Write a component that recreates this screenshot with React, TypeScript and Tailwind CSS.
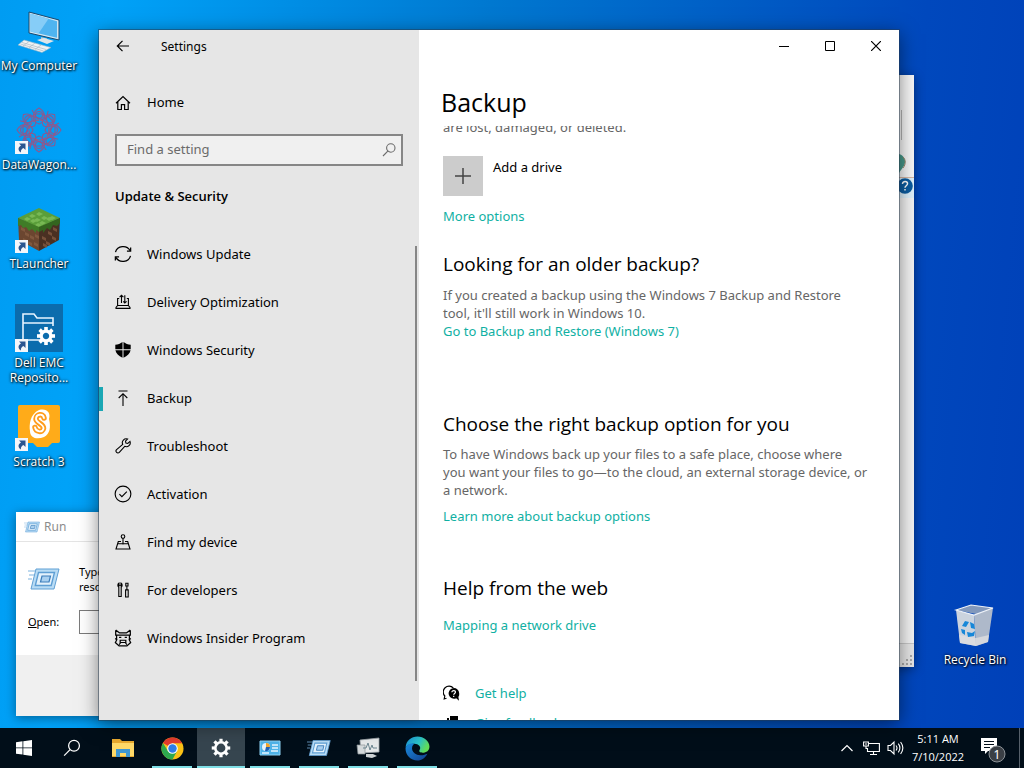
import type { ReactNode } from "react";

type IconProps = { className?: string };

/* ---------- line icons (16px grid) ---------- */

function Line({ children, size = 16 }: { children: ReactNode; size?: number }) {
  return (
    <svg width={size} height={size} viewBox="0 0 16 16" fill="none" stroke="currentColor" strokeWidth="1.1" className="shrink-0" aria-hidden="true">
      {children}
    </svg>
  );
}

const BackArrow = () => <Line><path d="M14 8H2.5M7.5 2.8 2.3 8l5.2 5.2" strokeWidth="1.2" /></Line>;
const HomeIcon = () => <Line><path d="M1 8.3 8 1.5l7 6.8M2.8 6.8v7.7h3.6V9.600h3.200v4.900h3.600V6.800" strokeWidth="1.2" /></Line>;
const SearchIcon = () => <Line><circle cx="9.8" cy="6" r="4.2" /><path d="M6.8 9.1 2 14" /></Line>;
const UpdateIcon = () => (
  <Line size={18}>
    <path d="M1.3 6.3A7 6.6 0 0 1 14.3 5M14.7 9.600A7 6.600 0 0 1 1.700 11" />
    <path d="M14.8 2.200v3.300h-3.300M1.200 13.800v-3.300h3.300" />
  </Line>
);
const DeliveryIcon = () => (
  <Line>
    <path d="M4.2 4.5H2.6v7h10.8v-7h-1.6M2.6 11.5 1 13.4v1h14v-1l-1.6-1.9" />
    <path d="M6.5 9V1.3M4.6 3.2l1.9-1.9 1.9 1.9M9.8 1.3V9M8.3 7.4 9.8 9l1.8-1.6" />
  </Line>
);
const ShieldIcon = () => (
  <svg width="16" height="16" viewBox="0 0 16 16" fill="currentColor" className="shrink-0" aria-hidden="true">
    <path d="M7.5 0v7.3H.3V2.8C3 2.6 5.4 1.6 7.5 0zM8.5 0c2.1 1.6 4.5 2.6 7.2 2.8v4.500H8.500zM.4 8.300h7.100v7.500C3.600 14 1 11.600.4 8.300zM15.600 8.300H8.500v7.500c3.900-1.800 6.500-4.200 7.100-7.500z" />
  </svg>
);
const BackupIcon = () => <Line><path d="M3.500 1h9M8 16V3.800M3.700 8 8 3.700 12.300 8" /></Line>;
const WrenchIcon = () => (
  <Line>
    <path d="M15 3.400a3.900 3.900 0 0 1-5.300 4.900L4.300 14.400a1.900 1.900 0 0 1-2.700-2.700l6.100-5.400A3.900 3.900 0 0 1 12.600 1L10.500 3.200l.4 1.900 1.900.4z" />
  </Line>
);
const ActivationIcon = () => <Line size={18}><circle cx="8" cy="8" r="7" strokeWidth="1" /><path d="m4.800 8.200 2.200 2.200 4.400-4.600" strokeWidth="1" /></Line>;
const FindIcon = () => (
  <Line><circle cx="8" cy="2.600" r="1.800" /><path d="M8 4.400v6M6 7.500H3.300L1 15h14l-2.300-7.500H10M3 9.800h10" /></Line>
);
const DevIcon = () => (
  <Line>
    <path d="M4 1v2.800h2V1c1.400.6 1.600 3.200.2 4.200v9.300H3.800V5.200C2.400 4.200 2.600 1.600 4 1zM10.600 15V8h2.600v7zM10.200 7.800h3.400M11.900 7.800V4M10.800 4V1.200h2.200V4z" />
  </Line>
);
const InsiderIcon = () => (
  <Line size={18}>
    <path d="M1.500 1v5M14.500 1v5M1.500 1 5 3.500h6L14.500 1M1.500 5.500h13M2.300 6v3M13.700 6v3M1 8.500l1.500 1L1.200 12l3.300 3h7l3.300-3-1.300-2.500 1.500-1" />
    <path d="M4.500 7.500h2M9.500 7.500h2M5.500 10h5v2h-5zM4.500 14l1.500-2M11.500 14 10 12" />
  </Line>
);

const HelpIcon = () => (
  <svg width="17" height="17" viewBox="0 0 17 17" className="shrink-0" aria-hidden="true">
    <path d="M3.500 13.300 1.200 14l.6-3A5 5 0 1 1 10.300 3" fill="none" stroke="#000" strokeWidth="1.200" />
    <path d="M16.200 8.200a5.300 5.300 0 1 0-3 5l2.800 2.600-.6-3.800a5 5 0 0 0 .8-3.800z" fill="#000" />
    <path d="M8.900 7.300c0-2.400 3.900-2.300 3.500 0-.2 1.200-1.700 1.100-1.700 2.500M10.700 10.800v1.200" fill="none" stroke="#fff" strokeWidth="1.200" />
  </svg>
);
const FeedbackIcon = () => (
  <svg width="17" height="17" viewBox="0 0 17 17" className="shrink-0" aria-hidden="true">
    <path d="M7 1h8v7h-4l-2 2V8H7zM4 3h2v5h3v5H4z" fill="#000" />
  </svg>
);

/* ---------- colour icons ---------- */

const ComputerIcon = () => (
  <svg width="48" height="48" viewBox="0 0 48 48" aria-hidden="true">
    <path d="m14 5 30 8v20l-30-7z" fill="#cfe6f3" stroke="#17486f" />
    <path d="m15.500 6.800 26.500 7.400v16.600l-26.500-6.200z" fill="#4fb4f0" />
    <path d="m15.500 6.800 18 5-10 14.600-8-1.800z" fill="#86cdf7" />
    <path d="m26 30 6 1.500v3l-6-1.500z" fill="#b7c3ca" />
    <path d="m22 33 7-2 10 3-7 3z" fill="#dfe5e8" />
    <path d="m9 33 27 7.500-9 5L3 38z" fill="#f0f2f3" stroke="#8fb3c9" strokeWidth=".6" />
    <path d="m7 35.500 24 7M5.500 37l23 7M14 34.500l-6 4.500M20 36l-6 4.700M26 38l-6 4.500" stroke="#a9bac5" strokeWidth=".7" />
  </svg>
);

const SWIRL = [0, 45, 90, 135, 180, 225, 270, 315];
const DataWagonIcon = () => (
  <svg width="48" height="48" viewBox="0 0 48 48" fill="none" aria-hidden="true">
    <g stroke="#8a5a90" strokeWidth="1.100">
      {SWIRL.map((deg) => (
        <g key={deg} transform={`rotate(${deg} 24 24)`}>
          <path d="M24 18c-8-3-7-12 0-16 7 4 8 13 0 16zM20 8h8l3 5M17 4l4 7 7 3" />
          <circle cx="24" cy="9" r="3.500" />
        </g>
      ))}
    </g>
    <circle cx="24" cy="24" r="10" stroke="#a05a80" strokeWidth="1.300" strokeDasharray="3 1" />
  </svg>
);

const GRASS = ["12 12", "17 9", "24 7", "29 11", "34 12", "22 13", "27 16", "18 14", "37 11", "23 18"];
const DIRT = ["6 22", "10 27", "15 30", "8 33", "19 37", "13 36", "20 29", "27 31", "33 26", "38 22", "31 36", "37 31", "28 38"];
const BlockIcon = () => (
  <svg width="48" height="48" viewBox="0 0 48 48" aria-hidden="true">
    <path d="m3 13 21 9v24L4 35z" fill="#6b4630" />
    <path d="m45 13-21 9v24l20-11z" fill="#4a3022" />
    {DIRT.map((p) => <path key={p} d={`M${p}l4 2v3l-4-2z`} fill="#8a6044" opacity=".7" />)}
    <path d="m24 3 21 10-21 10L3 13z" fill="#5a9e3a" />
    {GRASS.map((p) => <path key={p} d={`M${p}l4 2-4 2-3-2z`} fill="#78b854" />)}
    <path d="m3 13 21 9v5l-3-2v3l-4-4-3 2-3-4-3 1-2-3-3 1z" fill="#3f7c27" />
    <path d="m45 13-21 9v5l4-2v3l4-5 3 2 3-5 4 1 3-3z" fill="#33651f" />
  </svg>
);

const GEAR_TEETH = [0, 45, 90, 135, 180, 225, 270, 315];
function Gear({ r, hole, tooth }: { r: number; hole: number; tooth: number }) {
  return (
    <g>
      <circle r={(r + hole) / 2} fill="none" stroke="#fff" strokeWidth={r - hole} />
      {GEAR_TEETH.map((deg) => (
        <rect key={deg} x={-tooth / 2} y={-r - tooth * 0.7} width={tooth} height={tooth} fill="#fff" transform={`rotate(${deg})`} />
      ))}
    </g>
  );
}

const DellIcon = () => (
  <svg width="48" height="48" viewBox="0 0 48 48" aria-hidden="true">
    <rect width="48" height="48" fill="#0b6cad" />
    <path d="M26 36H8V10h11l3 4h16v8M8 19h30" fill="none" stroke="#e6f4ff" strokeWidth="1.600" />
    <g transform="translate(31 32)">
      <Gear r={6.500} hole={3.200} tooth={3.600} />
    </g>
  </svg>
);

const ScratchIcon = () => (
  <svg width="48" height="48" viewBox="0 0 48 48" aria-hidden="true">
    <path d="M5 2h38q2 0 2 2v34q0 2-2 2h-6l-4 4H22l-4-4H5q-2 0-2-2V4q0-2 2-2z" fill="#ffab19" />
    <path d="M24 7c8-2 12 3 10 9 2 8 1 15-5 18-7 3-14 1-14-6-1-6 0-17 9-21z" fill="#fff" />
    <path d="M29 15c-1-5-8-4-8 1 0 4 8 5 7.500 9.500-1 4.500-7.500 3.500-8.500-1" fill="none" stroke="#ff9d1c" strokeWidth="5.500" strokeLinecap="round" />
    <path d="M29 15c-1-5-8-4-8 1 0 4 8 5 7.500 9.500-1 4.500-7.500 3.500-8.500-1" fill="none" stroke="#fff" strokeWidth="1.800" strokeLinecap="round" />
  </svg>
);

const ShortcutMark = () => (
  <svg width="13" height="13" viewBox="0 0 13 13" className="absolute bottom-0 left-0" aria-hidden="true">
    <rect width="13" height="13" fill="#f4f6fa" />
    <path d="M4 2.500h6.500V9L8.500 7c-2 1-3 2.500-2.500 4.500C2.500 9.500 3 6 6 4.500z" fill="#2b5590" />
  </svg>
);

const RecycleIcon = () => (
  <svg width="48" height="48" viewBox="0 0 48 48" aria-hidden="true">
    <path d="m5 9 15-5 22 3-7 8z" fill="#8298bb" />
    <path d="m5 9 18 5 2 31-16-3z" fill="#cbd3de" />
    <path d="m42 7-19 7 2 31 12-4z" fill="#aeb9ca" />
    <path d="m8 34 17 3 13-3-1 7-12 4-16-3z" fill="#dedfe0" opacity=".8" />
    <path d="m5 9 15-5 22 3-19 7z" fill="none" stroke="#eef2f8" strokeWidth="1.200" />
    <path d="m11 25 3-5 4 1-3 5zM19 21l4 2 1 5-4-1zM10 28l4 1v5l-3-2zM16 31l5 1 3-2-1 5-6 1z" fill="#1787d8" />
  </svg>
);

const RunIcon = ({ className }: IconProps) => (
  <svg viewBox="0 0 32 24" className={className} aria-hidden="true">
    <path d="M8 2h23l-5 20H3z" fill="#b9dcf5" stroke="#5f9fd4" strokeWidth="1" />
    <path d="M10.500 5.500h16l-3.300 13H7.300z" fill="#e4f2fc" stroke="#5f9fd4" strokeWidth="1.400" />
    <path d="M14 9h8.500l-1.500 6h-8.500z" fill="#a9d0f0" stroke="#3c7dba" strokeWidth="1.200" />
    <path d="M0 4h7M1 8h5M0 12h4" stroke="#7db3df" />
  </svg>
);

const WindowsLogo = () => (
  <svg width="16" height="16" viewBox="0 0 16 16" fill="#fff" aria-hidden="true">
    <path d="m0 2.200 6.500-.9v6.200H0zM7.300 1.200 16 0v7.500H7.300zM0 8.300h6.500v6.300L0 13.700zM7.300 8.300H16V16l-8.700-1.200z" />
  </svg>
);
const ExplorerIcon = () => (
  <svg width="22" height="18" viewBox="0 0 22 18" aria-hidden="true">
    <path d="M0 0h8l2 2h12v16H0z" fill="#e8a92f" />
    <path d="M0 4h22v13H0z" fill="#ffd968" />
    <path d="M4 10h14v8h-4v-4H8v4H4z" fill="#3f97d3" />
  </svg>
);
const ChromeIcon = () => (
  <svg width="23" height="23" viewBox="0 0 24 24" aria-hidden="true">
    <circle cx="12" cy="12" r="11.500" fill="#fbc116" />
    <path d="M12 12 2.040 6.250A11.500 11.500 0 0 1 21.960 6.250L22 6.500H12z" fill="#e33b2e" />
    <path d="M2.040 6.250A11.500 11.500 0 0 0 12 23.500L16.800 14.700 12 12 7.200 14.700z" fill="#2da94f" />
    <circle cx="12" cy="12" r="5.500" fill="#fff" />
    <circle cx="12" cy="12" r="4.400" fill="#2f7de9" />
  </svg>
);
const SettingsGear = () => (
  <svg width="20" height="20" viewBox="-10 -10 20 20" aria-hidden="true"><Gear r={7} hole={4.400} tooth={3.200} /></svg>
);
const ControlPanelIcon = () => (
  <svg width="22" height="18" viewBox="0 0 22 18" aria-hidden="true">
    <path d="M1 2h20v14H1z" fill="#4fb3e8" stroke="#8fd3f6" />
    <circle cx="7" cy="8" r="4" fill="#e8f4fb" />
    <path d="M7 8V4a4 4 0 0 1 4 4z" fill="#f2a52c" />
    <path d="M7 8h4a4 4 0 0 1-5 4z" fill="#2262b5" />
    <path d="M13 6h6M13 9h6M12 12h7M3 14h7" stroke="#e8f6ff" strokeWidth="1.300" />
  </svg>
);
const MonitorAppIcon = () => (
  <svg width="24" height="22" viewBox="0 0 24 22" aria-hidden="true">
    <path d="M4 3 23 1v14L5 16z" fill="#e6e9ea" stroke="#9da5a8" strokeWidth=".8" />
    <path d="M1 8h8v9H2z" fill="#d4d9db" stroke="#8d9599" strokeWidth=".7" />
    <path d="M7 11h3l2-5 2 7 2-5 1 3h4" fill="none" stroke="#6c8690" />
    <path d="M10 17h7l4 2-5 2-6-1z" fill="#cdd2d4" />
  </svg>
);
const EdgeIcon = () => (
  <svg width="25" height="25" viewBox="0 0 24 24" aria-hidden="true">
    <defs>
      <linearGradient id="edgeTop" x1="0" y1="0" x2="1" y2=".4">
        <stop offset="0" stopColor="#1c8fd8" /><stop offset=".6" stopColor="#2bc3c9" /><stop offset="1" stopColor="#62dd58" />
      </linearGradient>
      <linearGradient id="edgeLow" x1="0" y1="0" x2="1" y2="1">
        <stop offset="0" stopColor="#1a8de0" /><stop offset="1" stopColor="#123f8d" />
      </linearGradient>
    </defs>
    <path d="M.6 11C1 4.500 6 .5 12 .5S23.500 5 23.500 10c0 4-3 6-6.500 6-2.500 0-4-1-3-2.500 2-3-1-6-5-6-4 0-7.500 1.500-8.400 3.500z" fill="url(#edgeTop)" />
    <path d="M.5 12c.5-4 5-5.500 8.500-4.500C5 10 6 18 14.500 18.500c3 .2 5-.8 7-1.500-2 4-5.500 6.500-9.500 6.500C5.500 23.500.5 18.500.5 12z" fill="url(#edgeLow)" />
  </svg>
);

/* ---------- data ---------- */

const NAV = [
  { label: "Windows Update", icon: <UpdateIcon /> },
  { label: "Delivery Optimization", icon: <DeliveryIcon /> },
  { label: "Windows Security", icon: <ShieldIcon /> },
  { label: "Backup", icon: <BackupIcon />, active: true },
  { label: "Troubleshoot", icon: <WrenchIcon /> },
  { label: "Activation", icon: <ActivationIcon /> },
  { label: "Find my device", icon: <FindIcon /> },
  { label: "For developers", icon: <DevIcon /> },
  { label: "Windows Insider Program", icon: <InsiderIcon /> },
];

const SHORTCUTS = [
  { label: "My Computer", icon: <ComputerIcon /> },
  { label: "DataWagon...", icon: <DataWagonIcon />, link: true },
  { label: "TLauncher", icon: <BlockIcon />, link: true },
  { label: "Dell EMC Reposito...", icon: <DellIcon />, link: true },
  { label: "Scratch 3", icon: <ScratchIcon />, link: true },
];

const TASKS = [
  { label: "File Explorer", icon: <ExplorerIcon /> },
  { label: "Chrome", icon: <ChromeIcon />, open: true },
  { label: "Settings", icon: <SettingsGear />, open: true, active: true },
  { label: "Control Panel", icon: <ControlPanelIcon />, open: true },
  { label: "Run", icon: <RunIcon className="h-[18px] w-6" />, open: true },
  { label: "Monitor", icon: <MonitorAppIcon />, open: true },
  { label: "Edge", icon: <EdgeIcon />, open: true },
];

/* ---------- pieces ---------- */

function DesktopIcon({ label, icon, link }: { label: string; icon: ReactNode; link?: boolean }) {
  return (
    <button className="flex h-[99px] w-[78px] flex-col items-center gap-[3px] pt-[7px] text-xs leading-[15px] text-white [text-shadow:1px_1px_2px_#000,0_0_3px_#000]">
      <span className="relative">
        {icon}
        {link && <ShortcutMark />}
      </span>
      <span>{label}</span>
    </button>
  );
}

function TextLink({ children }: { children: ReactNode }) {
  return <a href="#" className="block text-[13px] leading-[18px] text-[#10b0a3]">{children}</a>;
}

function SectionTitle({ children }: { children: ReactNode }) {
  return <h2 className="font-['Open_Sans',sans-serif] text-[19px] leading-8 text-black">{children}</h2>;
}

function RunDialog() {
  return (
    <section className="absolute bottom-3 left-4 flex h-[204px] w-[400px] flex-col bg-[#f0f0f0] shadow-[0_2px_10px_rgba(0,0,0,0.4)]">
      <header className="flex h-[30px] items-center gap-1 border-b border-[#e4e4e4] bg-white pl-2 text-xs text-[#8c8c8c]">
        <RunIcon className="h-3 w-4" /> Run
      </header>
      <div className="flex h-[113px] flex-col gap-4 bg-white px-3 pt-[22px] text-[11px] text-black">
        <div className="flex items-center gap-[19px]">
          <RunIcon className="h-6 w-8" />
          <p className="leading-[15px]">Type a<br />resource</p>
        </div>
        <div className="flex items-center">
          <label htmlFor="open" className="w-[51px]"><u>O</u>pen:</label>
          <input id="open" className="h-6 flex-1 border border-[#7a7a7a] px-1" />
        </div>
      </div>
    </section>
  );
}

function BackWindow() {
  return (
    <section className="absolute top-[75px] right-[110px] bottom-[61px] left-[500px] flex flex-col items-end bg-[#f3f3f3] shadow-[0_2px_10px_rgba(0,0,0,0.4)]">
      <svg width="15" height="128" viewBox="0 0 15 128" aria-hidden="true">
        <path d="M0 0h15v102H0z" fill="#f7f7f7" />
        <path d="M2.500 35v30" stroke="#b4b4b4" />
        <path d="M0 79c4 1 7 5 6 9s-3 5-6 10z" fill="#47998a" />
        <path d="M4 82c3 3 3 7 0 11" stroke="#a08a6c" fill="none" />
        <path d="M0 102.500h15" stroke="#d8b8a4" />
        <path d="M0 103h15v20H0z" fill="#dff1fb" />
        <circle cx="6" cy="111" r="7.800" fill="#0b5ca0" />
        <path d="M3.500 109c0-3.500 5.500-3.200 5 0-.3 1.800-2.500 1.800-2.500 3.800M6 114v1.600" fill="none" stroke="#fff" strokeWidth="1.500" />
      </svg>
      <footer className="mt-auto flex h-6 w-full items-end justify-end border-t border-[#c8c8c8] bg-[#e6e6e6] p-0.5">
        <svg width="10" height="10" viewBox="0 0 10 10" fill="#a8a8a8" aria-hidden="true">
          <path d="M8 0h2v2H8zM4 4h2v2H4zM8 4h2v2H8zM0 8h2v2H0zM4 8h2v2H4zM8 8h2v2H8z" />
        </svg>
      </footer>
    </section>
  );
}

function Sidebar() {
  return (
    <aside className="flex w-80 shrink-0 flex-col bg-[#e6e6e6] text-[13px] text-black">
      <div className="flex h-8 items-center text-xs">
        <button className="flex w-12 justify-center" aria-label="Back"><BackArrow /></button>
        <span className="pt-0.5 pl-[14px]">Settings</span>
      </div>
      <a href="#" className="mt-[17px] flex h-12 items-center gap-4 pl-4">
        <HomeIcon /> Home
      </a>
      <div className="mx-4 mt-[7px] flex h-8 shrink-0 items-center border-2 border-[#868686] bg-[#f0f0f0] pr-1">
        <input aria-label="Find a setting" placeholder="Find a setting" className="min-w-0 flex-1 bg-transparent px-2.5 outline-none placeholder:text-[#6b6b6b]" />
        <span className="text-[#6b6b6b]"><SearchIcon /></span>
      </div>
      <h2 className="mt-5 pl-4 font-['Open_Sans',sans-serif] leading-5 font-semibold">Update &amp; Security</h2>
      <nav className="mt-[25px] flex min-h-0 flex-1">
        <ul className="flex-1">
          {NAV.map((n) => (
            <li key={n.label}>
              <a href="#" className="flex h-12 items-center">
                <span className={n.active ? "h-6 w-1 bg-[#1aa7b4]" : "h-6 w-1"} />
                <span className="mb-0.5 ml-2.5 flex w-5 justify-center">{n.icon}</span>
                <span className="pl-[14px]">{n.label}</span>
              </a>
            </li>
          ))}
        </ul>
        <div className="mt-[15px] mr-0.5 mb-[39px] w-0.5 bg-[#868686]" />
      </nav>
    </aside>
  );
}

function SettingsWindow() {
  return (
    <main className="absolute top-[30px] right-[125px] bottom-2 left-[99px] flex overflow-hidden bg-white shadow-[0_0_0_1px_rgba(40,60,80,0.5),0_4px_18px_rgba(0,0,0,0.5)]">
      <Sidebar />
      <div className="flex min-w-0 flex-1 flex-col">
        <div className="flex h-8 shrink-0 justify-end text-black">
          <button aria-label="Minimize" className="flex w-[46px] items-center justify-center">
            <svg width="10" height="10" viewBox="0 0 10 10" stroke="currentColor" fill="none"><path d="M0 5.500h10" /></svg>
          </button>
          <button aria-label="Maximize" className="flex w-[46px] items-center justify-center">
            <svg width="10" height="10" viewBox="0 0 10 10" stroke="currentColor" fill="none"><path d="M.5.500h9v9h-9z" /></svg>
          </button>
          <button aria-label="Close" className="flex w-[46px] items-center justify-center">
            <svg width="10" height="10" viewBox="0 0 10 10" stroke="currentColor" strokeWidth="1.200" fill="none"><path d="m0 0 10 10M10 0 0 10" /></svg>
          </button>
        </div>
        <h1 className="mt-[22px] pl-[22px] font-['Open_Sans',sans-serif] text-[25px] leading-9 text-black">Backup</h1>
        <div className="mt-1.5 min-h-0 flex-1 overflow-hidden pl-6 text-[13px] leading-[18px] text-[#666]">
          <p className="-mt-2">are lost, damaged, or deleted.</p>
          <button className="mt-5 flex items-start gap-2.5 text-black">
            <span className="flex size-10 items-center justify-center bg-[#ccc]">
              <svg width="18" height="18" viewBox="0 0 18 18" stroke="#444" strokeWidth="1.500"><path d="M9 1v16M1 9h16" /></svg>
            </span>
            <span className="pt-0.5">Add a drive</span>
          </button>
          <div className="mt-[11px]"><TextLink>More options</TextLink></div>

          <div className="mt-[23px]">
            <SectionTitle>Looking for an older backup?</SectionTitle>
            <p className="mt-1.5">If you created a backup using the Windows 7 Backup and Restore<br />tool, it'll still work in Windows 10.</p>
            <TextLink>Go to Backup and Restore (Windows 7)</TextLink>
          </div>

          <div className="mt-[68px]">
            <SectionTitle>Choose the right backup option for you</SectionTitle>
            <p className="mt-[5px]">To have Windows back up your files to a safe place, choose where<br />you want your files to go—to the cloud, an external storage device, or<br />a network.</p>
            <div className="mt-2"><TextLink>Learn more about backup options</TextLink></div>
          </div>

          <div className="mt-[47px]">
            <SectionTitle>Help from the web</SectionTitle>
            <div className="mt-3"><TextLink>Mapping a network drive</TextLink></div>
          </div>

          <div className="mt-[50px] flex items-center gap-[15px]"><HelpIcon /><TextLink>Get help</TextLink></div>
          <div className="mt-3 flex items-center gap-[15px]"><FeedbackIcon /><TextLink>Give feedback</TextLink></div>
        </div>
      </div>
    </main>
  );
}

function Taskbar() {
  return (
    <footer className="flex h-10 shrink-0 bg-[#010e19] text-white">
      <button aria-label="Start" className="flex w-12 items-center justify-center"><WindowsLogo /></button>
      <button aria-label="Search" className="mr-[3px] flex w-12 items-center justify-center"><Line size={18}><circle cx="9.800" cy="6" r="4.800" /><path d="M6.300 9.400 1 14.800" /></Line></button>
      <div className="flex gap-px">
        {TASKS.map((t) => (
          <button key={t.label} aria-label={t.label} className={t.active ? "flex w-12 flex-col items-center bg-[#36454f]" : "flex w-12 flex-col items-center"}>
            <span className="flex flex-1 items-center pt-0.5">{t.icon}</span>
            <span className={t.active ? "h-0.5 w-full bg-[#7fdfe6]" : t.open ? "h-0.5 w-10 bg-[#7fdfe6]" : "h-0.5"} />
          </button>
        ))}
      </div>
      <div className="ml-auto flex items-center">
        <button aria-label="Show hidden icons" className="flex w-6 justify-center">
          <svg width="12" height="8" viewBox="0 0 12 8" fill="none" stroke="#fff" strokeWidth="1.200"><path d="m.5 7 5.500-5.500L11.500 7" /></svg>
        </button>
        <button aria-label="Network" className="flex w-6 justify-center">
          <svg width="17" height="15" viewBox="0 0 17 15" fill="none" stroke="#fff" strokeWidth="1.100"><path d="M6 2.500h10.400v8H4.500V7M10.500 10.500v3M7 13.500h7M.6 1h4.800v4H.6zM3 5v2.500h1.500M2 3h2" /></svg>
        </button>
        <button aria-label="Volume" className="flex w-6 justify-center">
          <svg width="17" height="16" viewBox="0 0 17 16" fill="none" stroke="#fff" strokeWidth="1.100"><path d="M1 5.500h2.500L7 2v12l-3.500-3.500H1zM9 5.500q2 2.500 0 5M11.300 3.700q3.200 4.300 0 8.600M13.600 2q4.500 6 0 12" /></svg>
        </button>
        <div className="w-[62px] text-center font-['Open_Sans',sans-serif] text-[11px] leading-[18px]">
          <div>5:11 AM</div>
          <div>7/10/2022</div>
        </div>
        <button aria-label="Notifications" className="flex w-12 justify-center pt-0.5">
          <svg width="26" height="28" viewBox="0 0 26 28">
            <path d="M1 3h16v13H8l-3 3v-3H1z" fill="#fff" />
            <path d="M4 6.500h10M4 9.500h10M4 12.500h6" stroke="#010e19" strokeWidth="1.200" />
            <circle cx="17" cy="19" r="8" fill="#3a3f45" stroke="#8d9398" />
            <text x="17" y="23.500" textAnchor="middle" fontSize="12" fill="#fff">1</text>
          </svg>
        </button>
        <span className="mr-1 ml-0.5 h-10 w-px bg-[#56606a]" />
      </div>
    </footer>
  );
}

export default function App() {
  return (
    <div className="flex h-screen flex-col overflow-hidden bg-[linear-gradient(95deg,#009cf2_0%,#00a2f8_10%,#0078d0_45%,#0048bd_85%,#0040b8_100%)] font-['Noto_Sans','Open_Sans',sans-serif]">
      <div className="relative min-h-0 flex-1">
        <div className="flex flex-col font-['Open_Sans',sans-serif]">
          {SHORTCUTS.map((s) => <DesktopIcon key={s.label} {...s} />)}
        </div>
        <div className="absolute right-[10px] bottom-[35px] font-['Open_Sans',sans-serif]">
          <DesktopIcon label="Recycle Bin" icon={<RecycleIcon />} />
        </div>
        <RunDialog />
        <BackWindow />
        <SettingsWindow />
      </div>
      <Taskbar />
    </div>
  );
}
